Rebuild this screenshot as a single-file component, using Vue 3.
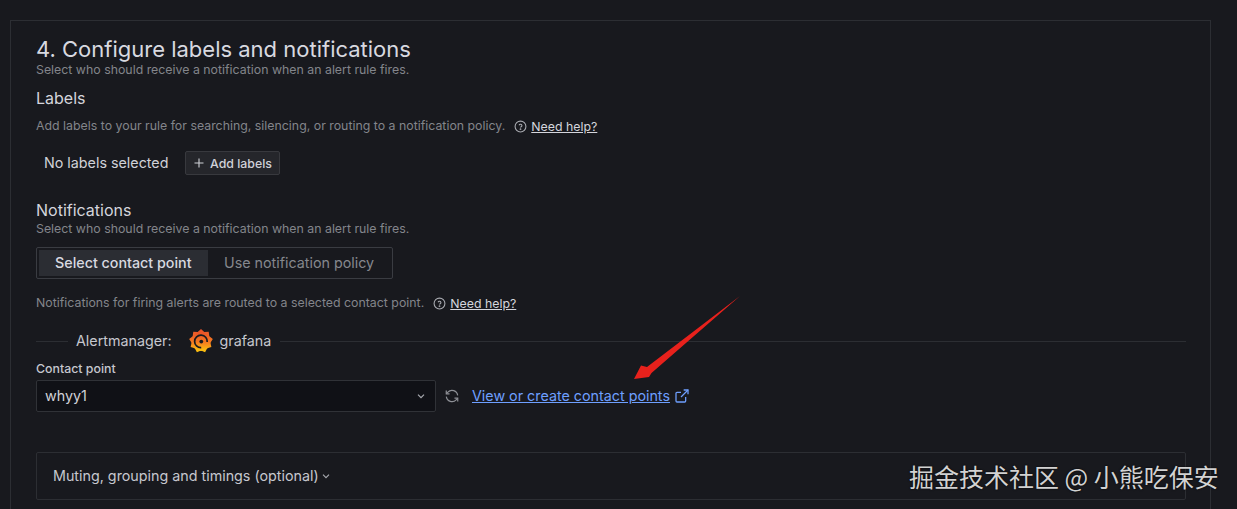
<script setup>
const gearPoints = (() => {
  const pts = []
  const n = 18
  for (let i = 0; i < n; i++) {
    const a = (Math.PI * 2 * i) / n - Math.PI / 2
    const r = i % 2 === 0 ? 12 : 9.6
    pts.push(`${(12 + r * Math.cos(a)).toFixed(2)},${(12 + r * Math.sin(a)).toFixed(2)}`)
  }
  return pts.join(' ')
})()
</script>

<template>
  <div class="page">
    <section class="card">
      <h2 class="title">4. Configure labels and notifications</h2>
      <p class="desc title-desc">Select who should receive a notification when an alert rule fires.</p>

      <h3 class="sub labels-head">Labels</h3>
      <div class="help-row labels-help">
        <span class="desc">Add labels to your rule for searching, silencing, or routing to a notification policy.</span>
        <span class="help">
          <svg class="help-icon" viewBox="0 0 24 24" width="13" height="13" fill="none" stroke="currentColor" stroke-width="2">
            <circle cx="12" cy="12" r="10" />
            <path d="M9.4 9.6a2.7 2.7 0 0 1 5.2.8c0 1.8-2.6 2.2-2.6 3.6" />
            <circle cx="12" cy="17" r="0.6" fill="currentColor" />
          </svg>
          <a class="help-link">Need help?</a>
        </span>
      </div>
      <div class="labels-row">
        <span class="no-labels">No labels selected</span>
        <button class="add-btn">
          <svg viewBox="0 0 12 12" width="12" height="12" fill="none" stroke="currentColor" stroke-width="1.1">
            <path d="M6 1.5v9M1.5 6h9" />
          </svg>
          Add labels
        </button>
      </div>

      <h3 class="sub notif-head">Notifications</h3>
      <p class="desc notif-desc">Select who should receive a notification when an alert rule fires.</p>
      <div class="radio">
        <span class="opt active">Select contact point</span>
        <span class="opt">Use notification policy</span>
      </div>
      <div class="help-row notif-help">
        <span class="desc">Notifications for firing alerts are routed to a selected contact point.</span>
        <span class="help">
          <svg class="help-icon" viewBox="0 0 24 24" width="13" height="13" fill="none" stroke="currentColor" stroke-width="2">
            <circle cx="12" cy="12" r="10" />
            <path d="M9.4 9.6a2.7 2.7 0 0 1 5.2.8c0 1.8-2.6 2.2-2.6 3.6" />
            <circle cx="12" cy="17" r="0.6" fill="currentColor" />
          </svg>
          <a class="help-link">Need help?</a>
        </span>
      </div>

      <div class="am-row">
        <span class="line short"></span>
        <span class="am-label">Alertmanager:</span>
        <svg class="logo" viewBox="0 0 24 24" width="24" height="24">
          <defs>
            <linearGradient id="gf" x1="0" y1="0" x2="0" y2="1">
              <stop offset="0" stop-color="#e8502a" />
              <stop offset="0.55" stop-color="#f47a20" />
              <stop offset="1" stop-color="#fbc40f" />
            </linearGradient>
          </defs>
          <polygon :points="gearPoints" fill="url(#gf)" />
          <circle cx="12" cy="12.3" r="9.6" fill="url(#gf)" />
          <path d="M18.2 13a6.3 6.3 0 1 0-6 5.7" fill="none" stroke="#181a1f" stroke-width="1.7" />
          <path d="M15 14a3.3 3.3 0 1 0-2.8 1.6" fill="none" stroke="#f2802a" stroke-width="0" />
          <circle cx="12.3" cy="12.6" r="1.9" fill="#181a1f" />
        </svg>
        <span class="am-name">grafana</span>
        <span class="line grow"></span>
      </div>

      <label class="field-label">Contact point</label>
      <div class="contact-row">
        <div class="select">
          <span class="lift">whyy1</span>
          <svg viewBox="0 0 12 12" width="12" height="12" fill="none" stroke="#a8aab0" stroke-width="1.2">
            <path d="M3 4.6 6 7.6l3-3" />
          </svg>
        </div>
        <svg class="sync" viewBox="0 0 24 24" width="16" height="16" fill="none" stroke="#8e9096" stroke-width="1.8">
          <path d="M20.5 11A8.5 8.5 0 0 0 5.8 6.3L3.6 8.5" />
          <path d="M3.4 3.8v4.9h4.9" />
          <path d="M3.5 13a8.5 8.5 0 0 0 14.7 4.7l2.2-2.2" />
          <path d="M20.6 20.2v-4.9h-4.9" />
        </svg>
        <a class="view-link lift">View or create contact points</a>
        <svg class="ext" viewBox="0 0 24 24" width="16" height="16" fill="none" stroke="#6e9fff" stroke-width="1.9">
          <path d="M17.5 13.5v6a1.5 1.5 0 0 1-1.5 1.5H4.5A1.5 1.5 0 0 1 3 19.5V8a1.5 1.5 0 0 1 1.5-1.5h6" />
          <path d="M14.5 3H21v6.5" />
          <path d="M21 3 10.5 13.5" />
        </svg>
      </div>

      <div class="collapse">
        <span class="lift">Muting, grouping and timings (optional)</span>
        <svg viewBox="0 0 12 12" width="12" height="12" fill="none" stroke="#a8aab0" stroke-width="1.1">
          <path d="M3 4.6 6 7.6l3-3" />
        </svg>
      </div>
    </section>

    <svg class="arrow" viewBox="0 0 1237 509" width="1237" height="509">
      <polygon points="740,296 647,367 641,365.5 634,379 649,377 651.5,373" fill="#e8211c" />
    </svg>

    <div class="watermark">掘金技术社区 @ 小熊吃保安</div>
  </div>
</template>

<style scoped>
.page {
  position: relative;
  width: 1237px;
  height: 509px;
  overflow: hidden;
  padding-top: 20px;
  box-sizing: border-box;
  background: #18191e;
  font-family: Inter, "Liberation Sans", sans-serif;
  color: #ccccdc;
}
.lift { padding-bottom: 2px; }
.card {
  margin-left: 10px;
  width: 1201px;
  height: 540px;
  box-sizing: border-box;
  border: 1px solid #2c2e33;
  padding: 15px 24px 0 25px;
}
.title {
  margin: 0;
  font-size: 22px;
  line-height: 26px;
  font-weight: 400;
  color: #d8d9e0;
}
.desc {
  margin: 0;
  font-size: 12.35px;
  line-height: 14px;
  color: #83858b;
  white-space: nowrap;
}
.title-desc { margin-top: 1px; }
.sub {
  margin: 0;
  font-size: 16px;
  line-height: 20px;
  font-weight: 400;
  color: #d4d5dc;
}
.labels-head { margin-top: 11px; }
.help-row {
  display: flex;
  align-items: center;
  height: 16px;
}
.labels-help { margin-top: 10px; }
.help {
  display: flex;
  align-items: center;
  margin-left: 9px;
  color: #c4c5cc;
  font-size: 12.35px;
}
.help-icon { margin-right: 4px; color: #a8aab0; }
.help-link {
  text-decoration: underline;
  color: #d4d5dc;
}
.labels-row {
  display: flex;
  align-items: center;
  margin-top: 17px;
  padding-left: 8px;
  height: 24px;
}
.no-labels {
  font-size: 14.3px;
  color: #d0d1d8;
  width: 141px;
  padding-bottom: 2px;
}
.add-btn {
  display: flex;
  align-items: center;
  justify-content: center;
  gap: 5px;
  width: 95px;
  height: 24px;
  padding: 0;
  border: 1px solid #38393e;
  border-radius: 2px;
  background: #25262b;
  font: 500 12.35px Inter, "Liberation Sans", sans-serif;
  color: #d0d1d8;
}
.notif-head { margin-top: 25px; }
.notif-desc { margin-top: 2px; }
.radio {
  display: flex;
  align-items: center;
  width: 357px;
  height: 32px;
  margin-top: 11px;
  box-sizing: border-box;
  border: 1px solid #3a3c42;
  border-radius: 2px;
  padding: 0 2px;
}
.opt {
  display: flex;
  align-items: center;
  height: 26px;
  box-sizing: border-box;
  font-size: 14.3px;
  color: #85878d;
  padding: 0 0 2px 16px;
  white-space: nowrap;
}
.opt.active {
  width: 169px;
  background: #2b2d33;
  color: #d8d9e0;
  font-weight: 500;
}
.notif-help { margin-top: 16px; }
.am-row {
  display: flex;
  align-items: center;
  height: 24px;
  margin-top: 18px;
  font-size: 14.3px;
  color: #c6c7ce;
}
.line {
  height: 1px;
  background: #2c2e33;
}
.line.short { width: 32px; }
.line.grow { flex: 1; margin-left: 9px; }
.am-label { margin-left: 8px; padding-bottom: 2px; }
.logo { margin-left: 17px; }
.am-name { margin-left: 7px; padding-bottom: 2px; }
.field-label {
  display: block;
  margin-top: 9px;
  font-size: 12.35px;
  line-height: 14px;
  font-weight: 500;
  color: #c6c7ce;
}
.contact-row {
  display: flex;
  align-items: center;
  margin-top: 4px;
}
.select {
  display: flex;
  align-items: center;
  justify-content: space-between;
  width: 400px;
  height: 32px;
  box-sizing: border-box;
  padding: 0 8px;
  border: 1px solid #303237;
  border-radius: 2px;
  background: #101116;
  font-size: 14.3px;
  color: #d0d1d8;
}
.sync { margin-left: 8px; }
.view-link {
  margin-left: 12px;
  font-size: 14.3px;
  color: #6e9fff;
  text-decoration: underline;
}
.ext { margin-left: 4px; }
.collapse {
  display: flex;
  align-items: center;
  gap: 1px;
  width: 1150px;
  height: 48px;
  box-sizing: border-box;
  margin-top: 40px;
  padding-left: 16px;
  border: 1px solid #2c2e33;
  border-radius: 2px;
  font-size: 14.3px;
  color: #c6c7ce;
}
.arrow {
  position: absolute;
  left: 0;
  top: 0;
  pointer-events: none;
}
.watermark {
  position: absolute;
  left: 909px;
  top: 460px;
  font-family: "Noto Sans CJK SC", sans-serif;
  font-size: 25px;
  line-height: 32px;
  color: #d2d2d2;
  white-space: nowrap;
  text-shadow: 0 0 2px #000;
}
</style>
<style>
html, body { margin: 0; background: #18191e; overflow: hidden; }
</style>
